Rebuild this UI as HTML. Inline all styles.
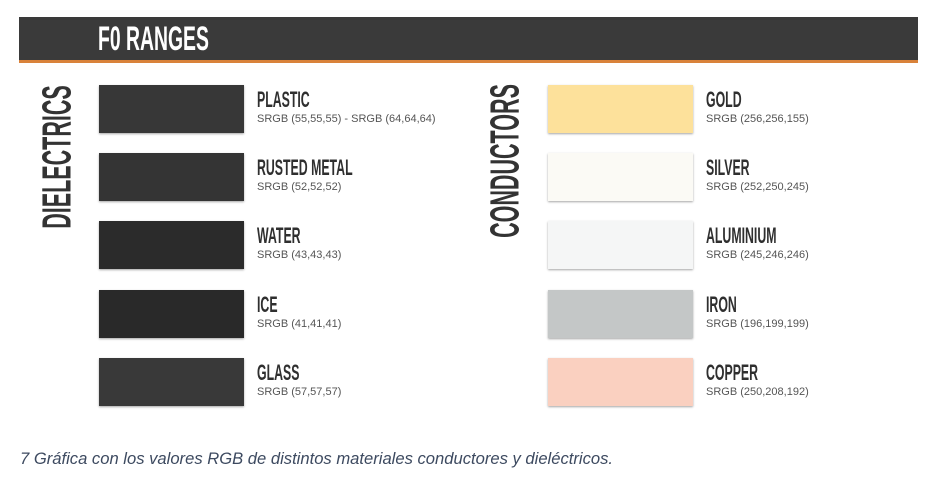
<!DOCTYPE html>
<html><head><meta charset="utf-8"><style>
body{margin:0;width:942px;height:482px;background:#fff;position:relative;overflow:hidden;font-family:"Liberation Sans",sans-serif}
.bar{position:absolute;left:19px;top:17px;width:899px;height:43px;background:#3a3a3a;border-bottom:3px solid #d9823a}
.t{position:absolute;font-weight:bold;white-space:nowrap;transform-origin:0 0}
.sw{position:absolute;width:145px;height:48px;box-shadow:0 1px 2px rgba(0,0,0,.35)}
.lab{position:absolute;font-weight:bold;font-size:22px;line-height:22px;color:#2f2f2f;white-space:nowrap;transform:scaleX(.56);transform-origin:0 0}
.sub{position:absolute;font-size:11px;color:#555;white-space:nowrap}
.v{position:absolute;font-weight:bold;font-size:41px;line-height:41px;color:#333;white-space:nowrap;transform:translate(-50%,-50%) rotate(-90deg) scaleX(.525)}
.cap{position:absolute;left:20px;top:449px;font-size:16.6px;font-style:italic;color:#3d4a60;white-space:nowrap}
</style></head><body>
<div class="bar"></div>
<div class="t" style="left:98px;top:22px;font-size:34px;line-height:34px;color:#fff;transform:scaleX(.57)">F0 RANGES</div>
<div class="v" style="left:57px;top:157px">DIELECTRICS</div>
<div class="v" style="left:505px;top:161px">CONDUCTORS</div>

<div class="sw" style="left:99px;top:85px;background:#373737"></div>
<div class="lab" style="left:257px;top:89px">PLASTIC</div><div class="sub" style="left:257px;top:113px">SRGB (55,55,55) - SRGB (64,64,64)</div>
<div class="sw" style="left:99px;top:153px;background:#343434"></div>
<div class="lab" style="left:257px;top:157px">RUSTED METAL</div><div class="sub" style="left:257px;top:181px">SRGB (52,52,52)</div>
<div class="sw" style="left:99px;top:221px;background:#2b2b2b"></div>
<div class="lab" style="left:257px;top:225px">WATER</div><div class="sub" style="left:257px;top:249px">SRGB (43,43,43)</div>
<div class="sw" style="left:99px;top:290px;background:#292929"></div>
<div class="lab" style="left:257px;top:294px">ICE</div><div class="sub" style="left:257px;top:318px">SRGB (41,41,41)</div>
<div class="sw" style="left:99px;top:358px;background:#393939"></div>
<div class="lab" style="left:257px;top:362px">GLASS</div><div class="sub" style="left:257px;top:386px">SRGB (57,57,57)</div>

<div class="sw" style="left:548px;top:85px;background:#fde19b"></div>
<div class="lab" style="left:706px;top:89px">GOLD</div><div class="sub" style="left:706px;top:113px">SRGB (256,256,155)</div>
<div class="sw" style="left:548px;top:153px;background:#fbfaf5"></div>
<div class="lab" style="left:706px;top:157px">SILVER</div><div class="sub" style="left:706px;top:181px">SRGB (252,250,245)</div>
<div class="sw" style="left:548px;top:221px;background:#f5f6f6"></div>
<div class="lab" style="left:706px;top:225px">ALUMINIUM</div><div class="sub" style="left:706px;top:249px">SRGB (245,246,246)</div>
<div class="sw" style="left:548px;top:290px;background:#c4c7c7"></div>
<div class="lab" style="left:706px;top:294px">IRON</div><div class="sub" style="left:706px;top:318px">SRGB (196,199,199)</div>
<div class="sw" style="left:548px;top:358px;background:#fad0c0"></div>
<div class="lab" style="left:706px;top:362px">COPPER</div><div class="sub" style="left:706px;top:386px">SRGB (250,208,192)</div>

<div class="cap">7 Gráfica con los valores RGB de distintos materiales conductores y dieléctricos.</div>
</body></html>
